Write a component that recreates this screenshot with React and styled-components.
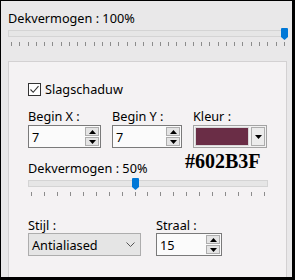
import React from "react";
import styled, { createGlobalStyle } from "styled-components";

const GlobalStyle = createGlobalStyle`
  html, body {
    margin: 0;
    padding: 0;
    background: #fff;
  }
  body {
    font-family: "Noto Sans", "Open Sans", sans-serif;
    font-size: 12.7px;
    color: #000;
  }
`;

const Frame = styled.div`
  width: 295px;
  height: 280px;
  box-sizing: border-box;
  border: 1px solid #000;
  border-right-width: 3px;
  border-bottom-width: 3px;
  background: #e9e8e9;
  padding: 9px 4px 0 7px;
  display: flex;
  flex-direction: column;
`;

const Label = styled.div`
  line-height: 16px;
  height: 16px;
  white-space: nowrap;
`;

const SliderBox = styled.div`
  position: relative;
  width: ${({ $w }) => $w}px;
  margin-top: 4px;
`;

const Track = styled.div`
  height: 7px;
  box-sizing: border-box;
  border: 1px solid #d4d4d4;
  background: #e6e6e6;
`;

const Ticks = styled.div`
  display: flex;
  justify-content: space-between;
  padding: 5px ${({ $r }) => $r}px 0 ${({ $l }) => $l}px;
`;

const Tick = styled.span`
  width: 1px;
  height: 4px;
  background: #8c8c8c;
`;

const Thumb = styled.svg`
  position: absolute;
  top: -2px;
  left: ${({ $x }) => $x}px;
`;

const Panel = styled.div`
  margin-top: 15px;
  flex: 1;
  width: 279px;
  box-sizing: border-box;
  border: 1px solid #d3d1d2;
  border-bottom: none;
  background: #f4f2f3;
  padding: 21px 0 0 19px;
  display: flex;
  flex-direction: column;
`;

const CheckRow = styled.label`
  display: flex;
  align-items: center;
  gap: 4px;
  height: 13px;
  line-height: 13px;
`;

const Box = styled.span`
  width: 13px;
  height: 13px;
  box-sizing: border-box;
  border: 1px solid #333;
  background: #fff;
  display: flex;
  align-items: center;
  justify-content: center;
`;

const FieldRow = styled.div`
  display: flex;
  margin-top: ${({ $mt }) => $mt}px;
`;

const Field = styled.div`
  position: relative;
  width: ${({ $w }) => $w}px;
  margin-right: ${({ $gap }) => $gap || 0}px;
  display: flex;
  flex-direction: column;
  gap: ${({ $lg }) => $lg || 0}px;
`;

const SpinInput = styled.div`
  position: relative;
  height: 23px;
  box-sizing: border-box;
  border: 1px solid #7a7a7a;
  background: #fbfbfb;
  display: flex;
  align-items: center;
  padding-left: 3px;
`;

const Spinner = styled.div`
  position: absolute;
  right: 1px;
  top: 1px;
  display: flex;
  flex-direction: column;
  gap: 1px;
`;

const SpinBtn = styled.div`
  width: 14px;
  height: 9px;
  box-sizing: border-box;
  border: 1px solid #adadad;
  background: #e4e4e4;
  display: flex;
  align-items: center;
  justify-content: center;
`;

const Combo = styled.div`
  height: 23px;
  box-sizing: border-box;
  border: 1px solid #a3a3a3;
  background: #f2f2f2;
  padding: 1px;
  display: flex;
  gap: 2px;
`;

const Swatch = styled.div`
  flex: 1;
  background: ${({ $c }) => $c};
  border: 1px solid #d8d8d8;
`;

const ComboBtn = styled.div`
  width: 14px;
  box-sizing: border-box;
  border: 1px solid #adadad;
  background: #ececec;
  display: flex;
  align-items: center;
  justify-content: center;
`;

const HexNote = styled.div`
  position: absolute;
  top: 42px;
  left: -8px;
  font-family: "Liberation Serif", "Times New Roman", serif;
  font-weight: bold;
  font-size: 20px;
  line-height: 23px;
  white-space: nowrap;
`;

const Select = styled.div`
  height: 23px;
  box-sizing: border-box;
  border: 1px solid #adadad;
  background: #e5e5e5;
  display: flex;
  align-items: center;
  justify-content: space-between;
  padding: 0 5px 0 3px;
`;

const Up = () => (
  <svg width="7" height="4" viewBox="0 0 7 4">
    <path d="M3.5 0 L7 4 L0 4 Z" fill="#000" />
  </svg>
);

const Down = () => (
  <svg width="7" height="4" viewBox="0 0 7 4">
    <path d="M0 0 L7 0 L3.5 4 Z" fill="#000" />
  </svg>
);

const Slider = ({ width, ticks, l, r, thumb }) => (
  <SliderBox $w={width}>
    <Track />
    <Ticks $l={l} $r={r}>
      {Array.from({ length: ticks }).map((_, i) => (
        <Tick key={i} />
      ))}
    </Ticks>
    <Thumb $x={thumb} width="7" height="12" viewBox="0 0 7 12">
      <path d="M1 0 H6 Q7 0 7 1 V9 L3.5 12 L0 9 V1 Q0 0 1 0 Z" fill="#0078d7" />
    </Thumb>
  </SliderBox>
);

const Spin = ({ value }) => (
  <SpinInput>
    {value}
    <Spinner>
      <SpinBtn>
        <Up />
      </SpinBtn>
      <SpinBtn>
        <Down />
      </SpinBtn>
    </Spinner>
  </SpinInput>
);

export default function App() {
  return (
    <>
      <GlobalStyle />
      <Frame>
        <Label>Dekvermogen : 100%</Label>
        <Slider width={278} ticks={34} l={3} r={1} thumb={273} />
        <Panel>
          <CheckRow>
            <Box>
              <svg width="11" height="11" viewBox="0 0 11 11">
                <path d="M1.5 5.5 L4.2 8.3 L9.5 2.2" fill="none" stroke="#333" strokeWidth="1.1" />
              </svg>
            </Box>
            Slagschaduw
          </CheckRow>

          <FieldRow $mt={12}>
            <Field $w={73} $gap={11} $lg={1}>
              <Label>Begin X :</Label>
              <Spin value="7" />
            </Field>
            <Field $w={70} $gap={11} $lg={1}>
              <Label>Begin Y :</Label>
              <Spin value="7" />
            </Field>
            <Field $w={74} $lg={1}>
              <Label>Kleur :</Label>
              <Combo>
                <Swatch $c="#6a2d46" />
                <ComboBtn>
                  <Down />
                </ComboBtn>
              </Combo>
              <HexNote>#602B3F</HexNote>
            </Field>
          </FieldRow>

          <FieldRow $mt={12}>
            <Field $w={240}>
              <Label>Dekvermogen : 50%</Label>
              <Slider width={240} ticks={19} l={3} r={3} thumb={104} />
            </Field>
          </FieldRow>

          <FieldRow $mt={21}>
            <Field $w={113} $gap={15}>
              <Label>Stijl :</Label>
              <Select>
                Antialiased
                <svg width="9" height="5" viewBox="0 0 9 5">
                  <path d="M0.5 0.5 L4.5 4.5 L8.5 0.5" fill="none" stroke="#555" strokeWidth="1" />
                </svg>
              </Select>
            </Field>
            <Field $w={66}>
              <Label>Straal :</Label>
              <Spin value="15" />
            </Field>
          </FieldRow>
        </Panel>
      </Frame>
    </>
  );
}
